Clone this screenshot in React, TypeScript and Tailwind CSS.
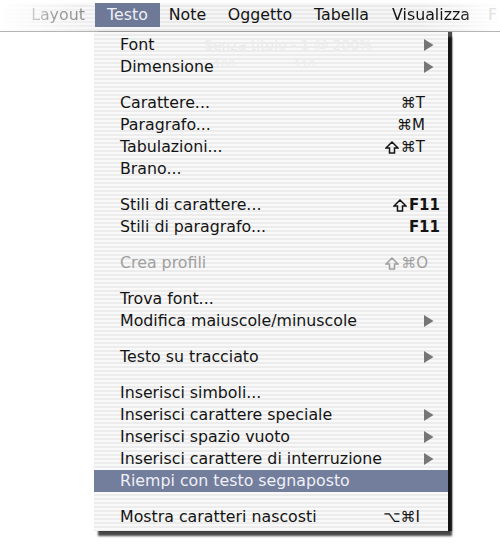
import React from 'react';

type Item =
  | { kind: 'sep' }
  | {
      kind: 'item';
      label: string;
      shortcut?: string;
      shift?: boolean;
      bold?: boolean;
      pr?: string;
      sub?: boolean;
      disabled?: boolean;
      active?: boolean;
    };

const items: Item[] = [
  { kind: 'item', label: 'Font', sub: true },
  { kind: 'item', label: 'Dimensione', sub: true },
  { kind: 'sep' },
  { kind: 'item', label: 'Carattere...', shortcut: '⌘T', pr: 'pr-[23px]' },
  { kind: 'item', label: 'Paragrafo...', shortcut: '⌘M', pr: 'pr-[23px]' },
  { kind: 'item', label: 'Tabulazioni...', shortcut: '⌘T', shift: true, pr: 'pr-[23px]' },
  { kind: 'item', label: 'Brano...' },
  { kind: 'sep' },
  { kind: 'item', label: 'Stili di carattere...', shortcut: 'F11', shift: true, bold: true, pr: 'pr-[8px]' },
  { kind: 'item', label: 'Stili di paragrafo...', shortcut: 'F11', bold: true, pr: 'pr-[8px]' },
  { kind: 'sep' },
  { kind: 'item', label: 'Crea profili', shortcut: '⌘O', shift: true, pr: 'pr-[20px]', disabled: true },
  { kind: 'sep' },
  { kind: 'item', label: 'Trova font...' },
  { kind: 'item', label: 'Modifica maiuscole/minuscole', sub: true },
  { kind: 'sep' },
  { kind: 'item', label: 'Testo su tracciato', sub: true },
  { kind: 'sep' },
  { kind: 'item', label: 'Inserisci simboli...' },
  { kind: 'item', label: 'Inserisci carattere speciale', sub: true },
  { kind: 'item', label: 'Inserisci spazio vuoto', sub: true },
  { kind: 'item', label: 'Inserisci carattere di interruzione', sub: true },
  { kind: 'item', label: 'Riempi con testo segnaposto', active: true },
  { kind: 'sep' },
  { kind: 'item', label: 'Mostra caratteri nascosti', shortcut: '⌥⌘I', pr: 'pr-[28px]' },
];

function Arrow() {
  return (
    <svg width="10" height="12" viewBox="0 0 10 12" className="mr-[14px]">
      <polygon points="0,0 9.5,6 0,12" fill="#767676" />
    </svg>
  );
}

function ShiftKey({ color }: { color: string }) {
  return (
    <svg width="14" height="13" viewBox="0 0 14 13" className="mr-[2px]">
      <polygon
        points="7,1 13,7 9.5,7 9.5,12 4.5,12 4.5,7 1,7"
        fill="none"
        stroke={color}
        strokeWidth="1.5"
        strokeLinejoin="miter"
      />
    </svg>
  );
}

export default function App() {
  return (
    <div
      className="relative w-[500px] h-[554px] overflow-hidden bg-white text-[#141414]"
      style={{ fontFamily: '"DejaVu Sans", "Liberation Sans", sans-serif' }}
    >
      {/* menu bar */}
      <div className="h-[29px] border-b border-[#b4b4b4] bg-[image:linear-gradient(90deg,#ffffff_0%,rgba(255,255,255,0)_22%,rgba(255,255,255,0)_84%,#ffffff_100%),repeating-linear-gradient(180deg,#f6f6f6_0px,#f6f6f6_2px,#e9e9e9_2px,#e9e9e9_4px)]">
        <div className="flex h-[24px] mt-[3px] text-[15.8px] leading-none">
          <div className="ml-[21px] w-[74px] flex items-center justify-center bg-[image:linear-gradient(90deg,#e8e8e8,#9a9a9a_45%,#8a8a8a)] bg-clip-text text-transparent">
            Layout
          </div>
          <div className="w-[65px] flex items-center justify-center bg-[#6e7897] text-[#eef0f6]">Testo</div>
          <div className="w-[55px] flex items-center justify-center">Note</div>
          <div className="w-[90px] flex items-center justify-center">Oggetto</div>
          <div className="w-[73px] flex items-center justify-center">Tabella</div>
          <div className="w-[106px] flex items-center justify-center bg-[image:linear-gradient(90deg,#141414_80%,#c8c8c8)] bg-clip-text text-transparent">
            Visualizza
          </div>
          <div className="ml-[4px] flex items-center text-[#e2e2e2]">F</div>
        </div>
      </div>

      {/* dropdown */}
      <div className="relative ml-[94px] w-[354px] pt-[2px] pb-[3px] text-[15.8px] shadow-[4px_0_1px_rgba(0,0,0,0.7),4px_5px_2px_rgba(0,0,0,0.72)] bg-[image:repeating-linear-gradient(180deg,#f9f9f9_0px,#f9f9f9_2px,#ececec_2px,#ececec_4px)]">
        <div className="absolute left-[110px] top-[3px] text-[14px] text-[#ebebeb] select-none">
          Senza titolo - 1 @ 200%
        </div>
        <div className="absolute left-[120px] top-[25px] text-[11px] text-[#ececec] select-none">100</div>
        <div className="absolute left-[200px] top-[25px] text-[11px] text-[#ececec] select-none">110</div>
        {items.map((it, i) =>
          it.kind === 'sep' ? (
            <div key={i} className="h-[14px]" />
          ) : (
            <div
              key={i}
              className={`relative flex items-center h-[22px] pl-[26px] ${
                it.active ? 'bg-[#737d9c] text-[#eef0f6]' : it.disabled ? 'text-[#a0a0a0]' : ''
              }`}
            >
              <span className="flex-1 whitespace-nowrap">{it.label}</span>
              {it.shortcut && (
                <span className={`${it.pr} flex items-center text-[15px] ${it.bold ? 'font-bold' : ''}`}>
                  {it.shift && <ShiftKey color={it.disabled ? '#a0a0a0' : '#141414'} />}
                  {it.shortcut}
                </span>
              )}
              {it.sub && <Arrow />}
            </div>
          )
        )}
      </div>
    </div>
  );
}
